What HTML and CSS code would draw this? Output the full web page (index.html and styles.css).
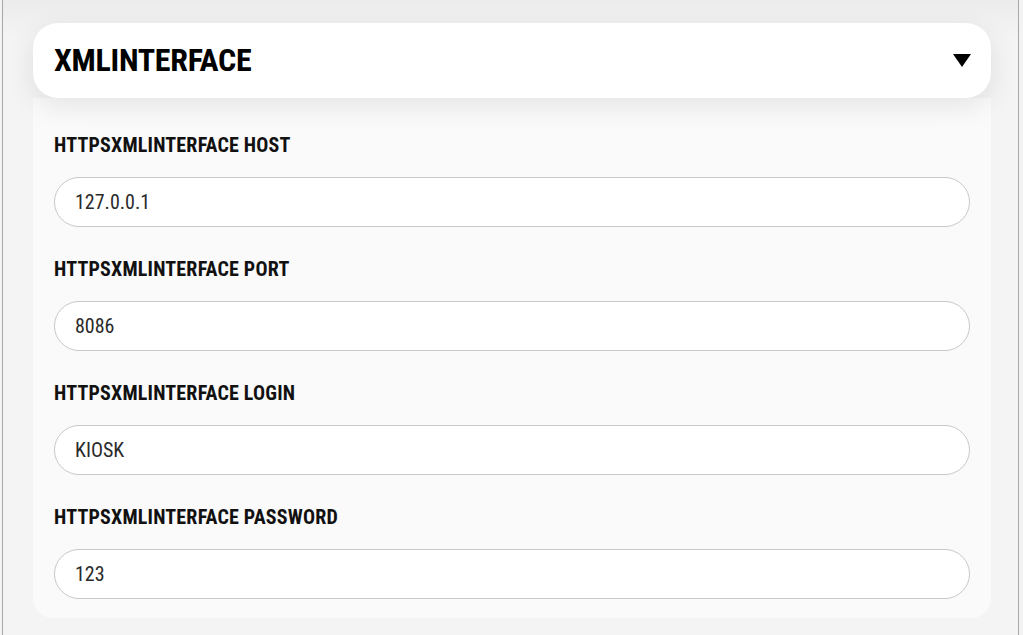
FILE: index.html
```html
<!DOCTYPE html>
<html lang="en">
<head>
    <meta charset="UTF-8">
    <meta name="viewport" content="width=device-width, initial-scale=1.0">
    <title>XMLINTERFACE</title>
    <link rel="stylesheet" href="styles.css">
</head>
<body>
    <div class="page">
        <div class="section">
            <div class="section-head">
                <h2>XMLINTERFACE</h2>
                <span class="arrow"></span>
            </div>
            <div class="section-body">
                <div class="field">
                    <label>HTTPSXMLINTERFACE HOST</label>
                    <input class="input" type="text" value="127.0.0.1">
                </div>
                <div class="field">
                    <label>HTTPSXMLINTERFACE PORT</label>
                    <input class="input" type="text" value="8086">
                </div>
                <div class="field">
                    <label>HTTPSXMLINTERFACE LOGIN</label>
                    <input class="input" type="text" value="KIOSK">
                </div>
                <div class="field">
                    <label>HTTPSXMLINTERFACE PASSWORD</label>
                    <input class="input" type="text" value="123">
                </div>
            </div>
        </div>
    </div>
</body>
</html>
```

FILE: styles.css
```css
html, body {
    margin: 0;
    height: 100%;
}
body {
    font-family: Roboto, "DejaVu Sans Condensed", sans-serif;
    font-stretch: 75%;
    background-color: #f3f3f3;
    color: #111;
    overflow: hidden;
}
.page {
    margin-left: 2px;
    width: 1017px;
    height: 100%;
    border-left: 1px solid #a8a8a8;
    border-right: 1px solid #a8a8a8;
    padding: 23px 0 0 30px;
    box-sizing: border-box;
    background: linear-gradient(to bottom, #ececec 0, #f4f4f4 40px, #f4f4f4 100%);
}
.section {
    width: 958px;
}
.section-head {
    display: flex;
    align-items: center;
    justify-content: space-between;
    height: 75px;
    padding: 0 21px;
    background-color: #fff;
    border-radius: 25px;
    box-shadow: 0 8px 28px rgba(0, 0, 0, 0.09);
    position: relative;
    z-index: 1;
}
.section-head h2 {
    margin: 0;
    font-size: 32px;
    font-weight: bold;
    letter-spacing: -0.3px;
    color: #000;
    padding-bottom: 1px;
}
.arrow {
    width: 0;
    height: 0;
    border-left: 9px solid transparent;
    border-right: 9px solid transparent;
    border-top: 13px solid #000;
    margin-right: -1px;
}
.section-body {
    background-color: #fafafa;
    border-radius: 0 0 20px 20px;
    padding: 37px 21px 19px;
    display: flex;
    flex-direction: column;
    gap: 32px;
}
.field {
    display: flex;
    flex-direction: column;
    gap: 22px;
}
.field label {
    font-size: 20px;
    font-weight: bold;
    line-height: 20px;
    letter-spacing: 0.2px;
    color: #111;
}
.input {
    height: 50px;
    border: 1px solid #c8c8c8;
    border-radius: 25px;
    background-color: #fff;
    padding: 0 20px;
    font-family: inherit;
    font-stretch: 75%;
    font-size: 20px;
    color: #2a2a2a;
    box-sizing: border-box;
    outline: none;
}
```
